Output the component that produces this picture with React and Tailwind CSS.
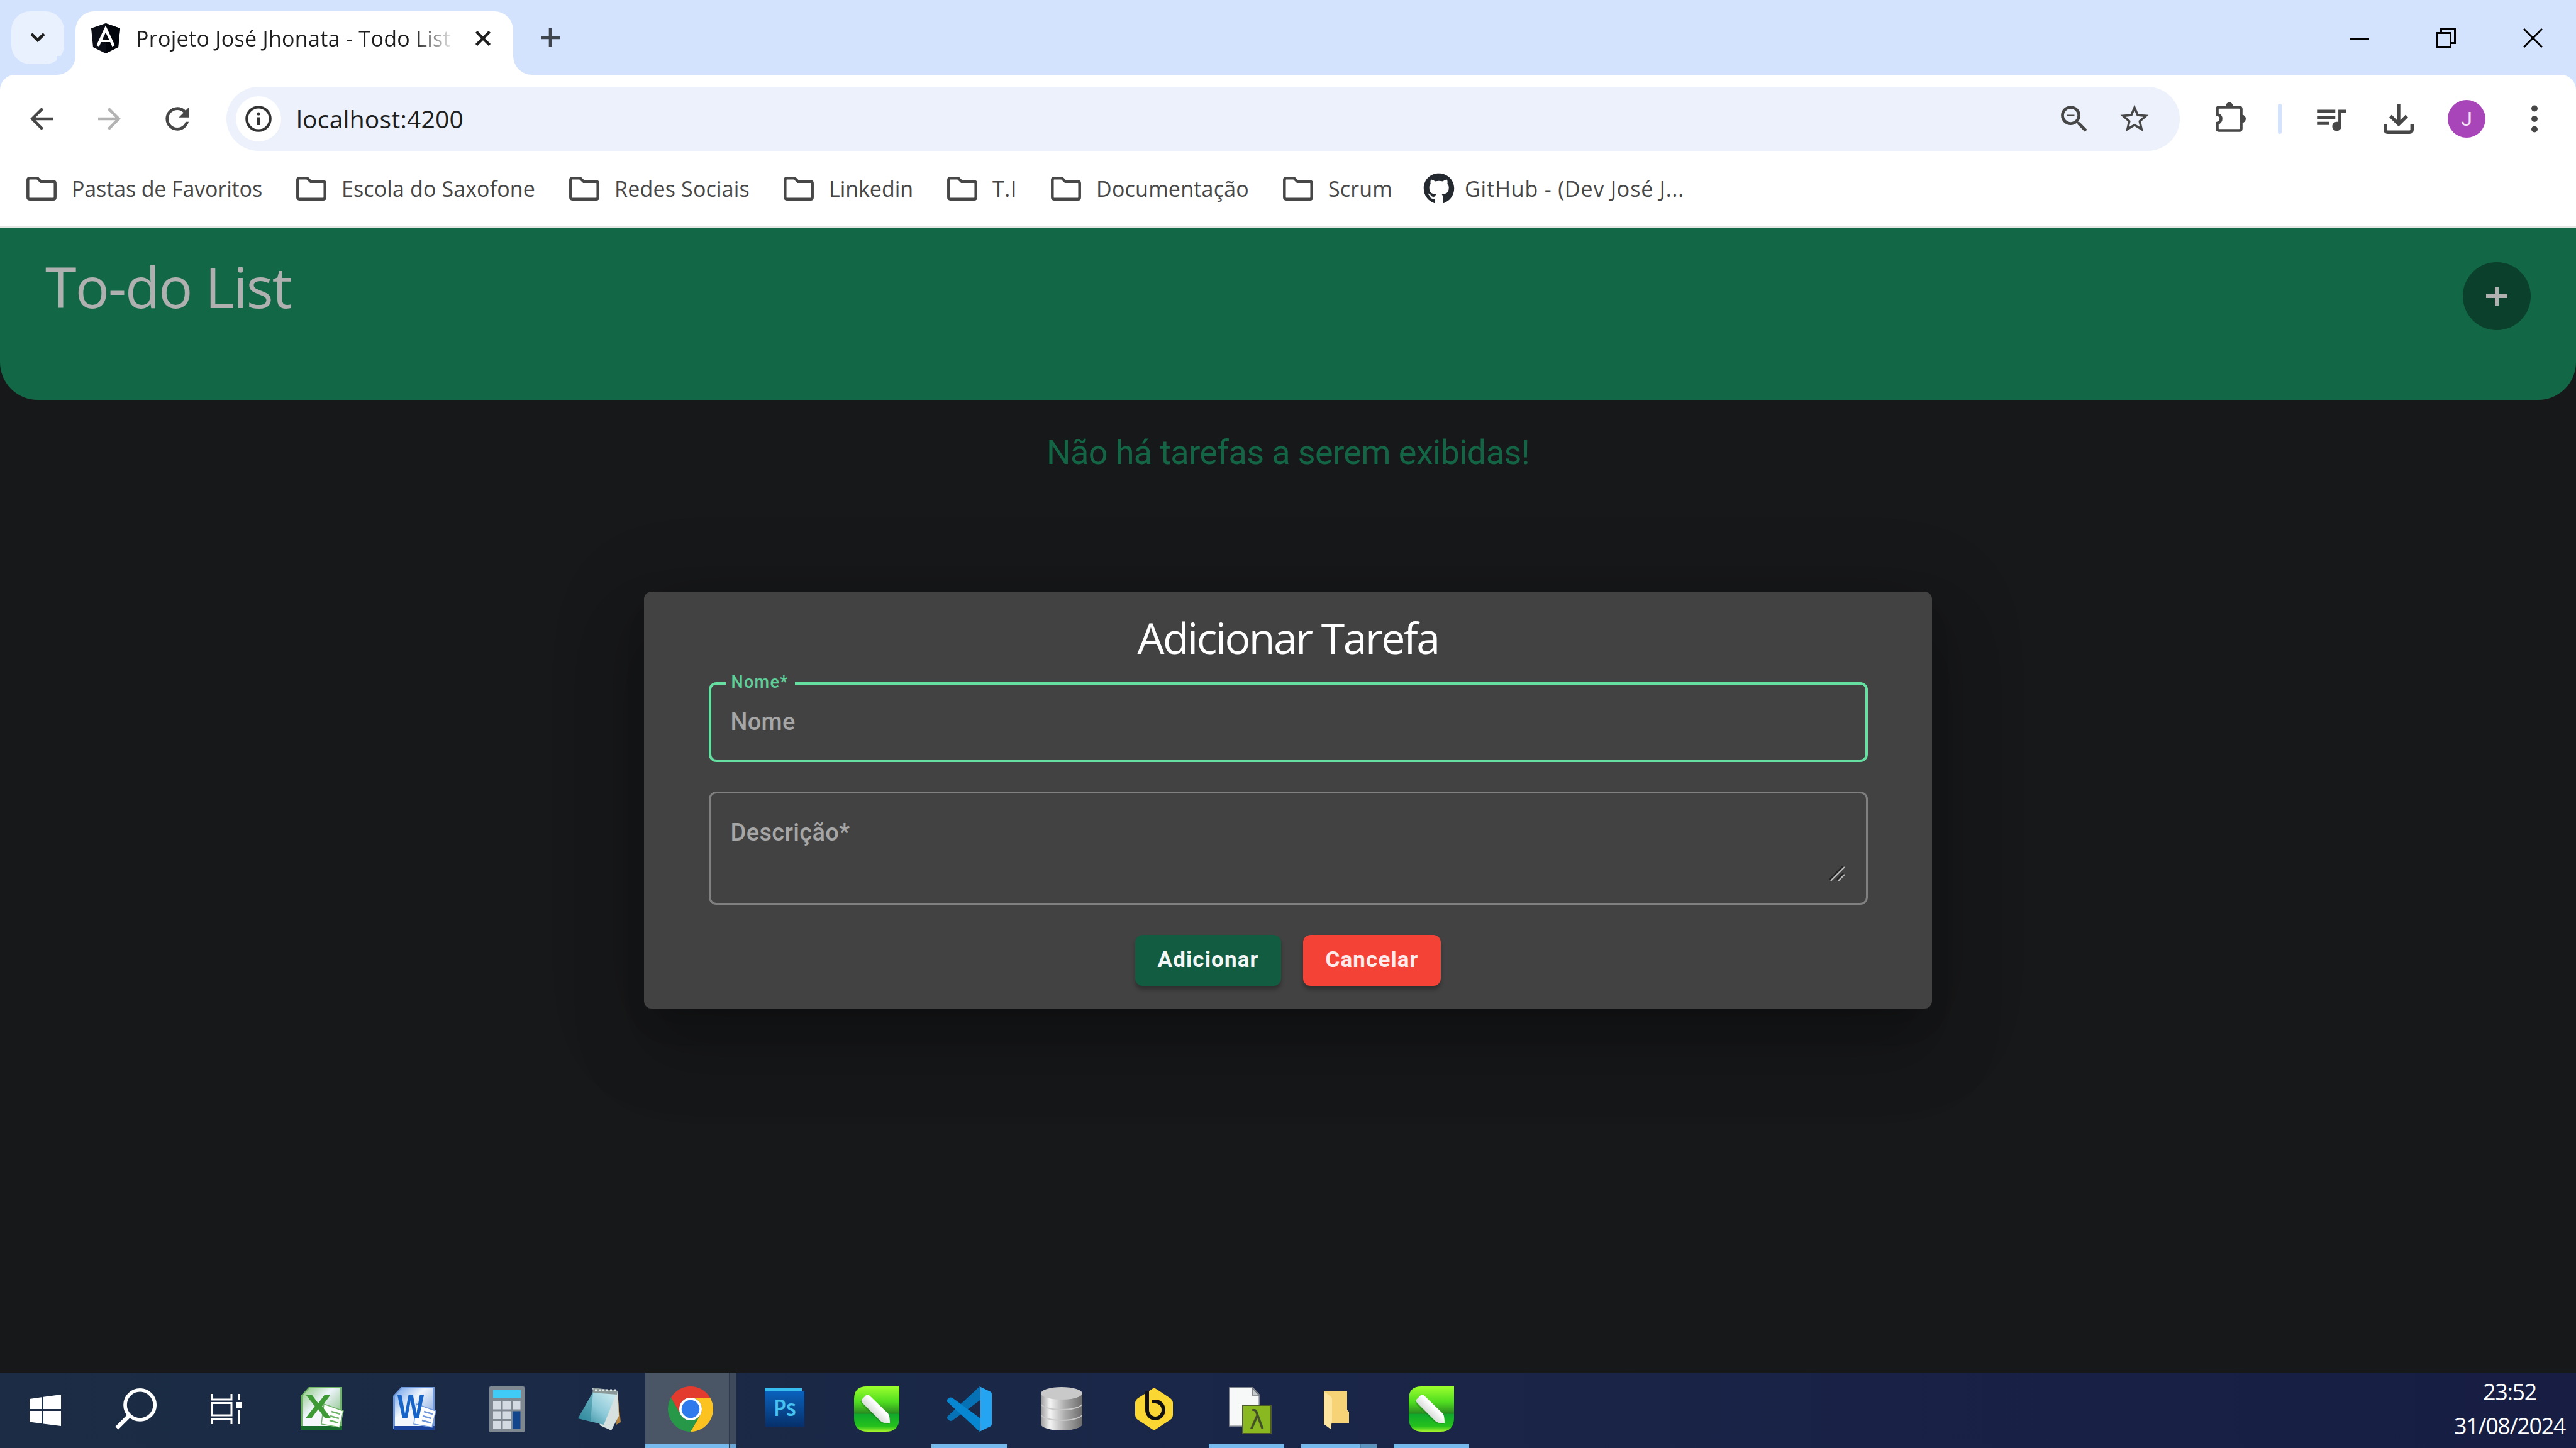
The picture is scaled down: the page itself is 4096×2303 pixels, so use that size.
import { useLayoutEffect, useRef } from "react";
import { MdArrowBack, MdArrowForward, MdRefresh, MdZoomOut, MdStarOutline, MdQueueMusic } from "react-icons/md";
import { FaGithub } from "react-icons/fa";

// A label whose tracking is adjusted so that it fills the given width.
function Fit({ w, className = "", children }) {
  const ref = useRef(null);
  useLayoutEffect(() => {
    const el = ref.current;
    el.style.letterSpacing = "0px";
    const natural = el.getBoundingClientRect().width;
    el.style.letterSpacing = `${(w - natural) / el.textContent.length}px`;
  }, [w]);
  return (
    <span ref={ref} className={`inline-block whitespace-nowrap ${className}`}>
      {children}
    </span>
  );
}

function AngularIcon() {
  return (
    <svg viewBox="0 0 48 48" className="h-12 w-12">
      <path d="M24 0 L47 8 L44 38 L24 48 L4 38 L1 8 Z" fill="#0b0e17" />
      <path d="M24 0 L47 8 L44 38 L24 48 Z" fill="#02040c" />
      <path d="M11.5 36 L24 9 L36.5 36" fill="none" stroke="#fff" strokeWidth="4.6" />
      <path d="M17 28 H31" stroke="#fff" strokeWidth="4" />
    </svg>
  );
}

function TabStrip() {
  return (
    <div className="flex h-[119px] pl-[18px] pt-[18px]">
      <div className="flex h-[84px] w-[84px] items-center justify-center rounded-[30px] bg-[#e9f0fe]">
        <svg viewBox="0 0 26 18" className="h-[18px] w-[26px]">
          <path d="M3 3 L13 13 L23 3" fill="none" stroke="#1f1f1f" strokeWidth="4.6" />
        </svg>
      </div>
      <div className="-ml-3 flex items-end">
        <div className="h-[30px] w-[30px] bg-white">
          <div className="h-full w-full rounded-br-[30px] bg-[#d3e3fd]" />
        </div>
        <div className="flex h-[101px] w-[696px] items-center rounded-t-[30px] bg-white pb-[15px] pl-6">
          <AngularIcon />
          <div className="ml-6 w-[502px] bg-gradient-to-r from-[#1f1f1f] from-88% to-[#1f1f1f]/10 bg-clip-text text-[34px] leading-[52px] text-transparent">
            <Fit w={501}>Projeto José Jhonata - Todo List</Fit>
          </div>
          <svg viewBox="0 0 26 26" className="ml-[37px] h-[26px] w-[26px]">
            <path d="M2.500 2.500 L23.500 23.500 M23.500 2.500 L2.500 23.500" stroke="#1f1f1f" strokeWidth="4.500" />
          </svg>
        </div>
        <div className="h-[30px] w-[30px] bg-white">
          <div className="h-full w-full rounded-bl-[30px] bg-[#d3e3fd]" />
        </div>
      </div>
      <svg viewBox="0 0 30 30" className="ml-[14px] mt-[27px] h-[30px] w-[30px]">
        <path d="M15 0 V30 M0 15 H30" stroke="#3f454d" strokeWidth="4.600" />
      </svg>
      <div className="ml-auto mr-[53px] mt-[27px] flex gap-[107px]">
        <svg viewBox="0 0 31 31" className="h-[31px] w-[31px]">
          <path d="M0 16.5 H31" stroke="#000" strokeWidth="3" />
        </svg>
        <svg viewBox="0 0 31 31" className="h-[31px] w-[31px]" fill="none" stroke="#000" strokeWidth="3">
          <path d="M1.5 7.5 H22.5 V29.5 H1.5 Z M7.5 7 V1.5 H29.5 V23.5 H23" />
        </svg>
        <svg viewBox="0 0 31 31" className="h-[31px] w-[31px]">
          <path d="M1 1 L30 30 M30 1 L1 30" stroke="#000" strokeWidth="3" />
        </svg>
      </div>
    </div>
  );
}

function Slot({ children, className = "w-[108px]" }) {
  return <div className={`flex h-full shrink-0 items-center justify-center ${className}`}>{children}</div>;
}

function Toolbar() {
  return (
    <div className="flex h-[140px] items-center pl-3 text-[#474747]">
      <Slot>
        <MdArrowBack className="h-[54px] w-[54px]" />
      </Slot>
      <Slot>
        <MdArrowForward className="h-[54px] w-[54px] text-[#b3b3b3]" />
      </Slot>
      <Slot>
        <MdRefresh className="h-[56px] w-[56px]" />
      </Slot>
      <div className="ml-6 flex h-[102px] w-[3106px] items-center rounded-full bg-[#ecf1fb] pl-[15px] pr-6">
        <div className="flex h-[72px] w-[72px] items-center justify-center rounded-full bg-white">
          <svg viewBox="0 0 42 42" className="h-[42px] w-[42px]">
            <circle cx="21" cy="21" r="18.7" fill="none" stroke="#333" strokeWidth="4.2" />
            <path d="M21 18.5 V31" stroke="#333" strokeWidth="4.4" />
            <circle cx="21" cy="13" r="2.6" fill="#333" />
          </svg>
        </div>
        <div className="ml-6 text-[39px] leading-[60px] text-[#1f1f1f]">
          <Fit w={266}>localhost:4200</Fit>
        </div>
        <div className="ml-auto flex h-full">
          <Slot className="w-24">
            <MdZoomOut className="h-[57px] w-[57px]" />
          </Slot>
          <Slot className="w-24">
            <MdStarOutline className="h-[54px] w-[54px]" />
          </Slot>
        </div>
      </div>
      <Slot className="ml-[27px] w-[108px]">
        <svg viewBox="0 0 48 48" className="mb-[6px] h-12 w-12">
          <path
            d="M5.5 8.5 H37.5 Q40.5 8.5 40.5 11.5 V42.500 Q40.500 45.500 37.500 45.500 H5.500 Q2.500 45.500 2.500 42.500 V34 C10.500 32 10.500 22 2.500 20 V11.500 Q2.500 8.500 5.500 8.500 Z"
            fill="none"
            stroke="#474747"
            strokeWidth="4.6"
          />
          <path d="M16 7 A5.800 6.500 0 0 1 27.600 7 Z M42 20.500 A6 6.500 0 0 1 42 33.500 Z" fill="#474747" />
        </svg>
      </Slot>
      <div className="ml-[21px] h-12 w-[6px] rounded-full bg-[#d3e3fd]" />
      <Slot className="ml-[24px] w-[108px]">
        <MdQueueMusic className="h-[58px] w-[58px]" />
      </Slot>
      <Slot>
        <svg viewBox="0 0 48 48" className="h-12 w-12" fill="none" stroke="#474747" strokeWidth="5.4">
          <path d="M24 0 V32 M11 19.500 L24 32.500 L37 19.500" />
          <path d="M2.700 33 V41 Q2.700 45.200 7 45.200 H41 Q45.300 45.200 45.300 41 V33" />
        </svg>
      </Slot>
      <Slot>
        <div className="flex h-[60px] w-[60px] items-center justify-center rounded-full bg-[#a846b9] font-[Roboto] text-[32px] text-[#f3e3f6]">
          J
        </div>
      </Slot>
      <Slot>
        <svg viewBox="0 0 12 46" className="h-[46px] w-3" fill="#474747">
          <circle cx="6" cy="6.500" r="5" />
          <circle cx="6" cy="23" r="5" />
          <circle cx="6" cy="39.500" r="5" />
        </svg>
      </Slot>
    </div>
  );
}

const bookmarks = [
  ["Pastas de Favoritos", 303],
  ["Escola do Saxofone", 308],
  ["Redes Sociais", 215],
  ["Linkedin", 134],
  ["T.I", 39],
  ["Documentação", 243],
  ["Scrum", 102],
];

function Bookmarks() {
  return (
    <div className="flex h-[81px] items-center gap-[54px] pl-[42px] text-[34px] leading-[52px] text-[#474747]">
      {bookmarks.map(([name, w]) => (
        <div key={name} className="flex items-center">
          <svg viewBox="0 0 48 38" className="mr-6 h-[38px] w-12">
            <path
              d="M5 2.300 H17.500 L23 7.800 H43 Q45.700 7.800 45.700 10.500 V33 Q45.700 35.700 43 35.700 H5 Q2.300 35.700 2.300 33 V5 Q2.300 2.300 5 2.300 Z"
              fill="none"
              stroke="#474747"
              strokeWidth="4.500"
            />
          </svg>
          <Fit w={w}>{name}</Fit>
        </div>
      ))}
      <div className="flex items-center">
        <FaGithub className="-ml-[5px] mr-[16px] h-[50px] w-[50px] text-[#24292f]" />
        <Fit w={349}>GitHub - (Dev José J...</Fit>
      </div>
    </div>
  );
}

function Dialog() {
  return (
    <div className="mx-auto mt-[181px] flex h-[663px] w-[2048px] flex-col items-center rounded-[12px] bg-[#424242] pt-[31px] shadow-[0_33px_45px_-21px_rgba(0,0,0,0.2),0_72px_114px_9px_rgba(0,0,0,0.14),0_27px_138px_24px_rgba(0,0,0,0.12)]">
      <h2 className="text-[68px] font-medium leading-[84px] text-white">
        <Fit w={479}>Adicionar Tarefa</Fit>
      </h2>
      <div className="relative mt-[29px] flex h-[127px] w-[1843px] items-center rounded-[12px] border-4 border-[#66dfa3] pb-[2px] pl-[31px] font-[Roboto] font-medium">
        <span className="absolute -top-[20px] left-[23px] bg-[#424242] pl-[9px] pr-[10px] text-[27px] leading-[32px] text-[#5fcf99]">
          <Fit w={91}>Nome*</Fit>
        </span>
        <span className="text-[38px] leading-[48px] text-[#a6a6a6]">
          <Fit w={103}>Nome</Fit>
        </span>
      </div>
      <div className="mt-[47px] flex h-[180px] w-[1843px] justify-between rounded-[12px] border-[3px] border-[#808080] pl-[32px] pr-[34px] pt-[38px] font-[Roboto] text-[38px] font-medium leading-[48px] text-[#a6a6a6]">
        <Fit w={190}>Descrição*</Fit>
        <svg viewBox="0 0 24 24" className="mt-[77px] h-6 w-6" strokeWidth="2.200">
          <path d="M0 22 L22 0 M12 22 L22 12" stroke="#222" />
          <path d="M2 24 L24 2 M14 24 L24 14" stroke="#bbb" />
        </svg>
      </div>
      <div className="mt-[48px] flex gap-[35px] font-[Roboto] text-[35px] font-bold leading-[79px]">
        <button className="h-[81px] w-[232px] rounded-[12px] bg-[#125c42] pb-[2px] text-center text-[#f2f7f5] shadow-[0_6px_6px_rgba(0,0,0,0.28)]">
          <Fit w={161}>Adicionar</Fit>
        </button>
        <button className="h-[81px] w-[219px] rounded-[12px] bg-[#f44336] pb-[2px] text-center text-[#fdeceb] shadow-[0_6px_6px_rgba(0,0,0,0.28)]">
          <Fit w={148}>Cancelar</Fit>
        </button>
      </div>
    </div>
  );
}

function WindowsIcon() {
  return (
    <svg viewBox="0 0 50 50" className="h-[50px] w-[50px]" fill="#fff">
      <path d="M0 7 L19 4.200 V23 H0 Z M22 3.700 L50 0 V23 H22 Z M0 26 H19 V46 L0 43.500 Z M22 26 H50 V50 L22 46.500 Z" />
    </svg>
  );
}

function SearchIcon() {
  return (
    <svg viewBox="0 0 72 72" className="mb-1 h-[68px] w-[68px]" fill="none" stroke="#fff">
      <circle cx="43" cy="29" r="25" strokeWidth="6" />
      <path d="M25 47 L4 68" strokeWidth="7" />
    </svg>
  );
}

function TaskViewIcon() {
  return (
    <svg viewBox="0 0 50 48" className="mb-1 h-12 w-[50px]" fill="none" stroke="#fff" strokeWidth="3">
      <path d="M1.500 0 V9 H33 V0 M1.500 48 V39.500 H33 V48 M1.500 14.500 H33 V34 H1.500 Z M45.500 0 V10 M45.500 25 V48" />
      <path d="M45.500 13 V22.500" strokeWidth="9" />
    </svg>
  );
}

function OfficeIcon({ letter, id, dark, mid, light, text }) {
  return (
    <svg viewBox="0 0 70 70" className="mb-[3px] h-[70px] w-[70px]">
      <defs>
        <linearGradient id={id} x1="0" y1="0" x2="1" y2="1">
          <stop offset="0" stopColor={light} />
          <stop offset="0.4" stopColor="#eef4fb" />
          <stop offset="1" stopColor={mid} />
        </linearGradient>
      </defs>
      <path d="M14 1 H67 V68 H1 V15 Z" fill={mid} />
      <path d="M15 3 H64 V64 H4 V15 Z" fill={`url(#${id})`} />
      <path d="M2 63 H67 V69 H2 Z" fill={dark} />
      <path d="M4 50 L45 30 L64 40 V63 H4 Z" fill="#f4f7fb" />
      <path d="M38 28 L69 39 L63 65 L34 60 Z" fill="#fff" stroke={mid} strokeWidth="1.500" />
      <path d="M50 40 L64 44 M48 47 L62 51 M47 54 L61 58" stroke={mid} strokeWidth="2.600" />
      <text x="29" y="51" textAnchor="middle" fontFamily="Liberation Sans" fontWeight="700" fontSize="54" fill={text} textLength="42" lengthAdjust="spacingAndGlyphs">
        {letter}
      </text>
    </svg>
  );
}

function CalculatorIcon() {
  const keys = [0, 1, 2].flatMap((r) => [0, 1, 2].map((c) => [r, c])).filter(([r, c]) => c < 2 || r === 0);
  return (
    <svg viewBox="0 0 56 73" className="h-[73px] w-[56px]">
      <rect width="56" height="73" rx="2" fill="#7f8790" />
      <rect x="6" y="6" width="44" height="13" fill="#3fcbf5" />
      {keys.map(([r, c]) => (
        <rect key={`${r}${c}`} x={6 + c * 15.5} y={24 + r * 15.5} width="12.500" height="12.500" fill="#d3dae2" />
      ))}
      <rect x="37" y="39.500" width="12.500" height="28" fill="#12458c" />
    </svg>
  );
}

function NotepadIcon() {
  return (
    <svg viewBox="0 0 70 70" className="h-[70px] w-[70px]">
      <defs>
        <linearGradient id="pad" x1="0" y1="1" x2="1" y2="0">
          <stop offset="0" stopColor="#217f92" />
          <stop offset="0.500" stopColor="#8cc9d8" />
          <stop offset="1" stopColor="#d3edf2" />
        </linearGradient>
      </defs>
      <path d="M64 10 L69 56 L62 60 Z" fill="#b5833a" />
      <path d="M24 2 L64 6 L66 46 L54 69 L36 61 Z" fill="#d7e1e0" />
      <path d="M25 8 L62 11 L42 60 L1 50 Z" fill="url(#pad)" />
      <path d="M25 8 L21 54 L1 50 Z" fill="#2b8799" opacity="0.550" />
      <path d="M26 1 L64 6 L63 12 L24 9 Z" fill="#8b9a98" />
      <path d="M28 5 H62" stroke="#e5e9e8" strokeWidth="3" strokeDasharray="3 3" />
    </svg>
  );
}

function ChromeIcon() {
  const wedge = "M1.610 6 A12 12 0 0 1 22.390 6 L12 6 A6 6 0 0 0 6.800 15 Z";
  return (
    <svg viewBox="0 0 24 24" className="h-[72px] w-[72px]">
      <path d={wedge} fill="#e33b2e" />
      <path d={wedge} fill="#fcc21f" transform="rotate(120 12 12)" />
      <path d={wedge} fill="#279847" transform="rotate(240 12 12)" />
      <circle cx="12" cy="12" r="6" fill="#fff" />
      <circle cx="12" cy="12" r="4.750" fill="#2f7bed" />
    </svg>
  );
}

function PhotoshopIcon() {
  return (
    <svg viewBox="0 0 64 66" className="mb-[4px] h-[66px] w-16">
      <defs>
        <linearGradient id="ps" x1="0" y1="0" x2="0" y2="1">
          <stop offset="0" stopColor="#0a66c4" />
          <stop offset="1" stopColor="#062f69" />
        </linearGradient>
      </defs>
      <path d="M1 2 H60 V7 H64 V64 H2 Z" fill="url(#ps)" />
      <path d="M1 2 H60 V6 H1 Z" fill="#37bdf0" />
      <text x="33" y="46" textAnchor="middle" fontFamily="Open Sans" fontWeight="600" fontSize="36" fill="#46c3f0" textLength="36" lengthAdjust="spacingAndGlyphs">
        Ps
      </text>
    </svg>
  );
}

function CorelIcon({ id }) {
  return (
    <svg viewBox="0 0 72 72" className="h-[72px] w-[72px]">
      <defs>
        <linearGradient id={id} x1="0" y1="0" x2="0" y2="1">
          <stop offset="0" stopColor="#9bff2c" />
          <stop offset="0.350" stopColor="#4fdc20" />
          <stop offset="0.600" stopColor="#2a8a20" />
          <stop offset="0.610" stopColor="#0fa82c" />
          <stop offset="0.880" stopColor="#25c21d" />
          <stop offset="1" stopColor="#a4f52c" />
        </linearGradient>
        <linearGradient id={`${id}-pen`} x1="0" y1="1" x2="1" y2="0">
          <stop offset="0.300" stopColor="#c9cfca" />
          <stop offset="0.600" stopColor="#ffffff" />
        </linearGradient>
      </defs>
      <path d="M20 0 H72 V50 Q72 72 50 72 H22 Q0 72 0 50 V20 Q0 0 20 0 Z" fill={`url(#${id})`} />
      <path d="M11 22 L19 13 Q21 11 25 15 L55 43 Q58 46 56.500 58 L44 57 L14 28 Z" fill="#176a1a" opacity="0.350" transform="translate(-1 2)" />
      <path d="M12 21 L19 14 Q22 12 25 15 L54 43 Q57 47 57 59 Q46 59 42 55 L13 26 Q11 23 12 21 Z" fill={`url(#${id}-pen)`} />
    </svg>
  );
}

function CodeIcon() {
  return (
    <svg viewBox="0 0 24 24" className="h-[72px] w-[72px]">
      <path d="M0.400 16 L17.600 0 L18 7.200 L3 18.200 Q2 18.600 1.400 18 L0.300 17 Z" fill="#0672b5" />
      <path d="M0.300 7 L1.500 6 Q2.200 5.600 3 6 L18 17 L17.600 24 L0.400 8.200 Q-0.100 7.600 0.300 7 Z" fill="#0787d2" />
      <path d="M17.500 0 L23.300 2.800 Q24 3.200 24 4 V20 Q24 20.800 23.300 21.200 L17.500 24 Q18 23.500 18 22.500 V1.500 Q18 0.500 17.500 0 Z" fill="#25a5f1" />
    </svg>
  );
}

function DatabaseIcon() {
  return (
    <svg viewBox="0 0 68 70" className="h-[70px] w-[68px]">
      <defs>
        <linearGradient id="db" x1="0" y1="0" x2="1" y2="0">
          <stop offset="0" stopColor="#9c9c9c" />
          <stop offset="0.220" stopColor="#f4f4f4" />
          <stop offset="0.600" stopColor="#a8a8a8" />
          <stop offset="1" stopColor="#6c6c6c" />
        </linearGradient>
      </defs>
      {[44, 27, 10].map((y) => (
        <g key={y}>
          <path d={`M1 ${y} V${y + 15} A33 10 0 0 0 67 ${y + 15} V${y} Z`} fill="url(#db)" />
          <ellipse cx="34" cy={y} rx="33" ry="10" fill="#c9c9c9" />
        </g>
      ))}
    </svg>
  );
}

function BeeIcon() {
  return (
    <svg viewBox="0 0 60 68" className="h-[68px] w-[60px]">
      <path d="M30 0 L38 5 L56 17 Q60 20 60 25 V43 Q60 48 56 51 L30 68 L4 51 Q0 48 0 43 V25 Q0 20 4 17 L15 10 Z" fill="#fbd734" />
      <path d="M19 6 V35 A13 13.500 0 1 0 31 22 H27" fill="none" stroke="#111" strokeWidth="6" />
    </svg>
  );
}

function LambdaFileIcon() {
  return (
    <svg viewBox="0 0 68 76" className="ml-3 mt-[6px] h-[76px] w-[68px]">
      <path d="M1 1 H38 L48 12 V62 H1 Z" fill="#f7f8f8" stroke="#9a9da0" strokeWidth="1.500" />
      <path d="M37 1 V13 H48 Z" fill="#c9cccf" stroke="#6d7276" strokeWidth="1.500" />
      <rect x="22" y="29" width="45" height="45" fill="#8ab821" stroke="#4e5c2a" strokeWidth="2" />
      <text x="44.500" y="66" textAnchor="middle" fontFamily="DejaVu Sans" fontSize="40" fill="#42502a">
        λ
      </text>
    </svg>
  );
}

function ExplorerIcon() {
  return (
    <svg viewBox="0 0 42 60" className="mr-[8px] mt-1 h-[60px] w-[42px]">
      <path d="M1 0 H38 V29 L41 33 V51 H8 V20 Z" fill="#f5d376" />
      <path d="M1 0 L12 8 Q14 10 14 14 V46 L12 60 L1 52 Z" fill="#fde5a0" />
    </svg>
  );
}

const apps = [
  { icon: <OfficeIcon letter="X" id="xl" dark="#176b2c" mid="#6fb567" light="#8bc97e" text="#3d9a34" /> },
  { icon: <OfficeIcon letter="W" id="wd" dark="#1b439c" mid="#6f98dc" light="#6da0ea" text="#1764c8" /> },
  { icon: <CalculatorIcon /> },
  { icon: <NotepadIcon /> },
  { icon: <ChromeIcon />, state: "active" },
  { icon: <PhotoshopIcon /> },
  { icon: <CorelIcon id="corel-a" /> },
  { icon: <CodeIcon />, state: "open" },
  { icon: <DatabaseIcon /> },
  { icon: <BeeIcon /> },
  { icon: <LambdaFileIcon />, state: "open" },
  { icon: <ExplorerIcon />, state: "stack" },
  { icon: <CorelIcon id="corel-b" />, state: "open" },
];

function TaskbarApp({ icon, state }) {
  if (state === "active") {
    return (
      <div className="flex h-full w-[147px] pr-[2px]">
        <div className="flex h-full w-[133px] flex-col items-center bg-[#4a5566]">
          <div className="flex flex-1 items-center pl-[10px] pt-[2px]">{icon}</div>
          <div className="h-[6px] w-full bg-[#76b9ed]" />
        </div>
        <div className="flex w-3 flex-col border-l-2 border-[#2f3b4c] bg-[#3f4a5c]">
          <div className="mt-auto h-[6px] bg-[#6aa6d6]" />
        </div>
      </div>
    );
  }
  return (
    <div className="flex h-full w-[147px] flex-col items-center">
      <div className="flex flex-1 items-center pt-[2px]">{icon}</div>
      {state === "open" && <div className="h-[6px] w-[120px] bg-[#76b9ed]" />}
      {state === "stack" && (
        <div className="flex h-[6px] w-[120px]">
          <div className="flex-1 bg-[#76b9ed]" />
          <div className="w-[27px] border-l-2 border-[#4a7fa8] bg-[#5d93bf]" />
        </div>
      )}
      {!state && <div className="h-[6px]" />}
    </div>
  );
}

function Taskbar() {
  return (
    <div className="flex h-[120px] bg-gradient-to-r from-[#1b2c44] via-[#1a2648] to-[#171d43]">
      <Slot className="w-36">
        <WindowsIcon />
      </Slot>
      <Slot className="w-36">
        <SearchIcon />
      </Slot>
      <Slot className="w-36">
        <TaskViewIcon />
      </Slot>
      <div className="ml-[6px] flex">
        {apps.map((app, i) => (
          <TaskbarApp key={i} {...app} />
        ))}
      </div>
      <div className="ml-auto mr-[17px] flex flex-col items-center pt-[4px] text-[36px] leading-[54px] text-white">
        <Fit w={85}>23:52</Fit>
        <Fit w={177}>31/08/2024</Fit>
      </div>
    </div>
  );
}

export default function App() {
  return (
    <div className="flex h-[2303px] w-[4096px] flex-col overflow-hidden bg-[#17181a] font-['Open_Sans',sans-serif]">
      <div className="bg-[#d3e3fd]">
        <TabStrip />
        <div className="h-[244px] rounded-t-[24px] border-b-[3px] border-[#e3e6e3] bg-white">
          <Toolbar />
          <Bookmarks />
        </div>
      </div>
      <header className="flex h-[273px] items-start justify-between rounded-b-[60px] bg-[#126746] px-[72px]">
        <h1 className="mt-[38px] text-[90px] leading-[108px] text-[#b0b0b0]">
          <Fit w={391}>To-do List</Fit>
        </h1>
        <div className="mt-[54px] flex h-[108px] w-[108px] items-center justify-center rounded-full bg-[#0b402c]">
          <svg viewBox="0 0 34 32" className="h-8 w-[34px]">
            <path d="M17 1 V31 M0 16 H34" stroke="#b0b0b0" strokeWidth="6" />
          </svg>
        </div>
      </header>
      <main className="flex-1">
        <p className="mt-[44px] text-center font-[Roboto] text-[54px] font-normal leading-[80px] text-[#136546]">
          <Fit w={768}>Não há tarefas a serem exibidas!</Fit>
        </p>
        <Dialog />
      </main>
      <Taskbar />
    </div>
  );
}
